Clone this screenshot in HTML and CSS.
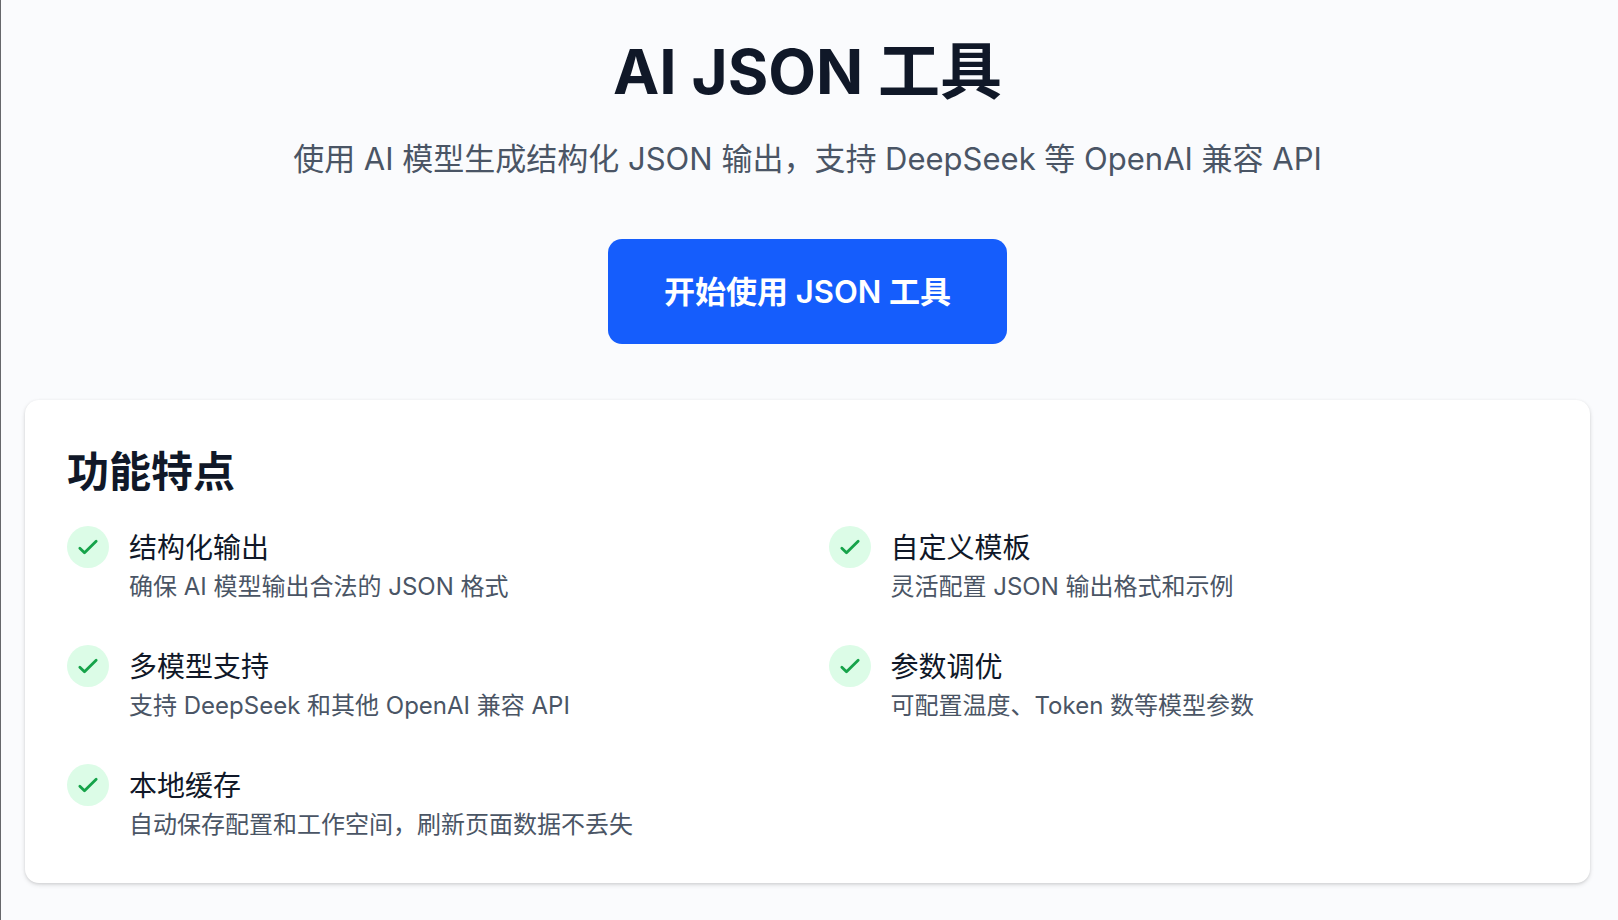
FILE: index.html
```html
<!DOCTYPE html>
<html lang="zh-CN">
<head>
<meta charset="utf-8">
<meta name="viewport" content="width=device-width, initial-scale=1">
<title>AI JSON 工具</title>
<link rel="stylesheet" href="styles.css">
</head>
<body>
<svg class="sprite" aria-hidden="true">
  <symbol id="check" viewBox="0 0 24 24">
    <path d="M5 13l4 4L19 7" fill="none" stroke="currentColor" stroke-width="2.4" stroke-linecap="round" stroke-linejoin="round"/>
  </symbol>
</svg>
<main class="page">
  <header class="hero">
    <h1 class="hero-title">AI JSON 工具</h1>
    <p class="hero-text">使用 AI 模型生成结构化 JSON 输出，支持 DeepSeek 等 OpenAI 兼容 API</p>
    <a class="hero-button" href="#features">开始使用 JSON 工具</a>
  </header>
  <section class="card" id="features">
    <h2 class="card-title">功能特点</h2>
    <ul class="features">
      <li class="feature">
        <span class="badge"><svg class="badge-icon" aria-hidden="true"><use href="#check"/></svg></span>
        <div>
          <h3 class="feature-title">结构化输出</h3>
          <p class="feature-text">确保 AI 模型输出合法的 JSON 格式</p>
        </div>
      </li>
      <li class="feature">
        <span class="badge"><svg class="badge-icon" aria-hidden="true"><use href="#check"/></svg></span>
        <div>
          <h3 class="feature-title">自定义模板</h3>
          <p class="feature-text">灵活配置 JSON 输出格式和示例</p>
        </div>
      </li>
      <li class="feature">
        <span class="badge"><svg class="badge-icon" aria-hidden="true"><use href="#check"/></svg></span>
        <div>
          <h3 class="feature-title">多模型支持</h3>
          <p class="feature-text">支持 DeepSeek 和其他 OpenAI 兼容 API</p>
        </div>
      </li>
      <li class="feature">
        <span class="badge"><svg class="badge-icon" aria-hidden="true"><use href="#check"/></svg></span>
        <div>
          <h3 class="feature-title">参数调优</h3>
          <p class="feature-text">可配置温度、Token 数等模型参数</p>
        </div>
      </li>
      <li class="feature">
        <span class="badge"><svg class="badge-icon" aria-hidden="true"><use href="#check"/></svg></span>
        <div>
          <h3 class="feature-title">本地缓存</h3>
          <p class="feature-text">自动保存配置和工作空间，刷新页面数据不丢失</p>
        </div>
      </li>
    </ul>
  </section>
</main>
</body>
</html>
```

FILE: styles.css
```css
* {
  box-sizing: border-box;
  margin: 0;
  padding: 0;
}

body {
  min-height: 100vh;
  background: #fafbfd;
  border-left: 1px solid #66676b;
  color: #101828;
  font-family: Inter, "Noto Sans CJK SC", sans-serif;
}

.sprite {
  display: none;
}

.page {
  padding: 36px 28px 28px 24px;
}

.hero {
  display: flex;
  flex-direction: column;
  align-items: center;
  margin-bottom: 56px;
  text-align: center;
}

.hero-title {
  margin-bottom: 26px;
  font-size: 62px;
  font-weight: 700;
  line-height: 72px;
}

.hero-text {
  margin-bottom: 56px;
  color: #4a5565;
  font-size: 31px;
  line-height: 49px;
}

.hero-button {
  padding: 28px 56px;
  border-radius: 14px;
  background: #155dfc;
  color: #fff;
  font-size: 31px;
  font-weight: 600;
  line-height: 49px;
  text-decoration: none;
}

.card {
  padding: 42px;
  border-radius: 14px;
  background: #fff;
  box-shadow: 0 2px 5px rgba(0, 0, 0, 0.1), 0 1px 3px rgba(0, 0, 0, 0.1);
}

.card-title {
  margin-bottom: 24px;
  font-size: 42px;
  font-weight: 700;
  line-height: 60px;
}

.features {
  display: grid;
  grid-template-columns: repeat(auto-fit, minmax(min(100%, 560px), 1fr));
  gap: 42px;
  list-style: none;
}

.feature {
  display: flex;
  align-items: flex-start;
  gap: 20px;
}

.badge {
  display: flex;
  flex: none;
  align-items: center;
  justify-content: center;
  width: 42px;
  height: 42px;
  border-radius: 50%;
  background: #dcfce7;
  color: #16a34a;
}

.badge-icon {
  width: 28px;
  height: 28px;
}

.feature-title {
  font-size: 28px;
  font-weight: 400;
  line-height: 44px;
}

.feature-text {
  color: #4a5565;
  font-size: 24px;
  line-height: 33px;
}
```
